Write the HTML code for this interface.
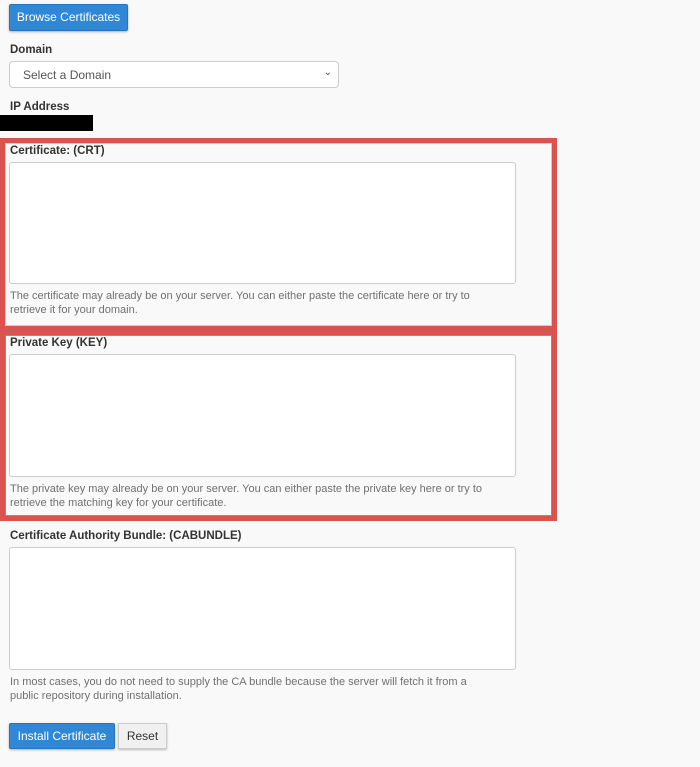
<!DOCTYPE html>
<html><head><style>
body{margin:0;width:700px;height:767px;background:#f9f9f9;font-family:"Liberation Sans",sans-serif;position:relative;overflow:hidden;color:#333}
.a{position:absolute}
.lbl{font-size:11.5px;font-weight:bold;color:#333}
.help{font-size:11px;color:#707070;line-height:14px;width:485px}
.ta{background:#fff;border:1px solid #ccc;border-radius:3px;box-sizing:border-box}
.btn{background:#2f87d6;color:#fff;font-size:12px;border:1px solid #2a73b8;border-radius:2px;box-sizing:border-box;text-align:center;box-shadow:0 1px 2px rgba(0,0,0,.3)}
.red{background:#d9534f}
</style></head><body>
<div class="a btn" style="left:9px;top:4px;width:119px;height:27px;line-height:25px">Browse Certificates</div>
<div class="a lbl" style="left:10px;top:44px">Domain</div>
<div class="a ta" style="left:9px;top:61px;width:330px;height:27px;border-radius:4px;font-size:12px;color:#555;padding:6px 13px">Select a Domain<span style="position:absolute;right:6px;top:5px;font-size:10px">&#8964;</span></div>
<div class="a lbl" style="left:10px;top:101px">IP Address</div>
<div class="a" style="left:0;top:115px;width:93px;height:16px;background:#000"></div>

<div class="a red" style="left:0;top:138px;width:557px;height:383px"></div>
<div class="a" style="left:5px;top:143px;width:547px;height:183px;background:#f9f9f9;border:1px solid #ccc;box-sizing:border-box"></div>
<div class="a" style="left:5px;top:335px;width:547px;height:181px;background:#f9f9f9;border:1px solid #4aa3df;box-sizing:border-box"></div>

<div class="a lbl" style="left:10px;top:145px">Certificate: (CRT)</div>
<div class="a ta" style="left:9px;top:162px;width:507px;height:122px"></div>
<div class="a help" style="left:10px;top:289px">The certificate may already be on your server. You can either paste the certificate here or try to retrieve it for your domain.</div>

<div class="a lbl" style="left:10px;top:337px">Private Key (KEY)</div>
<div class="a ta" style="left:9px;top:354px;width:507px;height:123px"></div>
<div class="a help" style="left:10px;top:482px">The private key may already be on your server. You can either paste the private key here or try to retrieve the matching key for your certificate.</div>

<div class="a lbl" style="left:10px;top:530px">Certificate Authority Bundle: (CABUNDLE)</div>
<div class="a ta" style="left:9px;top:547px;width:507px;height:123px"></div>
<div class="a help" style="left:10px;top:675px;width:480px">In most cases, you do not need to supply the CA bundle because the server will fetch it from a public repository during installation.</div>

<div class="a btn" style="left:9px;top:723px;width:106px;height:26px;line-height:24px">Install Certificate</div>
<div class="a" style="left:118px;top:723px;width:49px;height:26px;line-height:24px;background:#f0f0f0;border:1px solid #ccc;box-sizing:border-box;font-size:12px;text-align:center;color:#333;box-shadow:0 1px 2px rgba(0,0,0,.25)">Reset</div>
</body></html>
